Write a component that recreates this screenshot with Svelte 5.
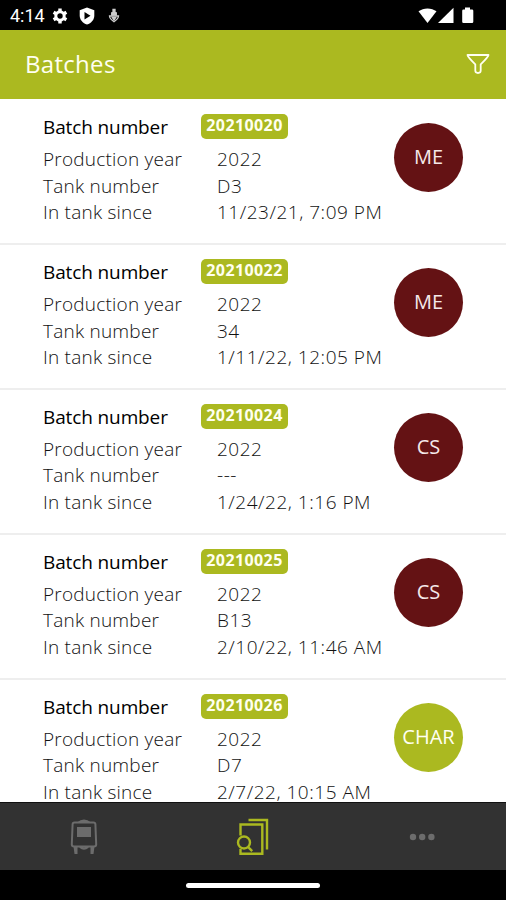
<script>
  const batches = [
    { number: '20210020', year: '2022', tank: 'D3', since: '11/23/21, 7:09 PM', variety: 'ME', kind: 'red' },
    { number: '20210022', year: '2022', tank: '34', since: '1/11/22, 12:05 PM', variety: 'ME', kind: 'red' },
    { number: '20210024', year: '2022', tank: '---', since: '1/24/22, 1:16 PM', variety: 'CS', kind: 'red' },
    { number: '20210025', year: '2022', tank: 'B13', since: '2/10/22, 11:46 AM', variety: 'CS', kind: 'red' },
    { number: '20210026', year: '2022', tank: 'D7', since: '2/7/22, 10:15 AM', variety: 'CHAR', kind: 'white' },
  ]
  let tab = $state('batches')
</script>

<div class="screen">
  <div class="status">
    <span class="clock">4:14</span>
    <svg class="gear" width="16" height="16" viewBox="0 0 16 16">
      <path class="teeth" d="M8 .6v14.8M1.6 4.3l12.8 7.4M1.6 11.7l12.8-7.4" />
      <circle cx="8" cy="8" r="4.2" />
    </svg>
    <svg class="shield" width="16" height="18" viewBox="0 0 16 18">
      <path fill="#fff" d="M8 .5l7.3 2.7v5.2c0 4.300-3 7.600-7.300 9.200C3.700 16 .7 12.700.7 8.400V3.200z" />
      <path fill="#000" d="M5.500 5l6 3.700-6 3.700z" />
    </svg>
    <svg class="debug" width="12" height="16" viewBox="0 0 12 16">
      <path fill="#ccc" d="M5 1.500h2v4H5z" />
      <path d="M3.700 5.500Q6 2.800 8.300 5.500M1.500 8h9c0 2.600-2 4-4.500 5.700C3.500 12 1.500 10.600 1.500 8z" />
      <path fill="#ccc" d="M3.700 5h4.600v2H3.700zM4.300 9.500h3.400L6 12z" />
    </svg>
    <svg class="signals" width="58" height="18" viewBox="0 0 58 18">
      <path d="M.5 4.300C5.500.4 13.500.4 18.500 4.300L9.500 16z" transform="translate(2)" />
      <path d="M35.500.8V16H20z" transform="translate(2)" />
      <path d="M47 .5h5v2h2q1.300 0 1.300 1.300v10.900q0 1.300-1.300 1.300h-8.500q-1.300 0-1.300-1.300V3.800q0-1.300 1.300-1.300H47z" transform="translate(2)" />
    </svg>
  </div>

  <header>
    <h1>Batches</h1>
    <button class="filter" aria-label="Filter">
      <svg width="24" height="22" viewBox="0 0 24 22">
        <path d="M1.500 2h21c0 1.500-2.500 4.200-7.800 9.400v6.200q0 2.400-2.700 2.400t-2.700-2.400v-6.200C4 6.200 1.500 3.500 1.500 2z" />
      </svg>
    </button>
  </header>

  <main>
    {#each batches as batch}
      <section class="batch">
        <div class="info">
          <div class="line head">
            <span class="label">Batch number</span>
            <span class="badge">{batch.number}</span>
          </div>
          <div class="line">
            <span class="label">Production year</span>
            <span class="value">{batch.year}</span>
          </div>
          <div class="line">
            <span class="label">Tank number</span>
            <span class="value">{batch.tank}</span>
          </div>
          <div class="line">
            <span class="label">In tank since</span>
            <span class="value">{batch.since}</span>
          </div>
        </div>
        <div class="avatar" class:white={batch.kind == 'white'}>{batch.variety}</div>
      </section>
    {/each}
  </main>

  <nav>
    <button class:active={tab == 'tanks'} aria-label="Tanks" onclick={() => tab = 'tanks'}>
      <svg width="28" height="38" viewBox="0 0 28 38">
        <path d="M4.500 4.500h19q1.800 0 1.900 1.800l.8 20.200q0 2-2.300 2H4.100q-2.300 0-2.300-2l.8-20.200q.1-1.800 1.900-1.800zM10 29q4 3.500 8 0" />
        <path class="fill" d="M7 9h14v10H7zM7 4.500Q14-1.500 21 4.500zM3.500 28.500h4V36h-3zM20.500 28.500h4l-1 7.500h-3z" />
      </svg>
    </button>
    <button class:active={tab == 'batches'} aria-label="Batches" onclick={() => tab = 'batches'}>
      <svg width="34" height="38" viewBox="0 0 34 38">
        <path class="thick" d="M12.500 2H31v29.500M4.500 17.500V6.500h21.800v29.200H4.500v-5M12.200 29.200l4 4" />
        <circle class="thick" cx="8" cy="24.500" r="6" />
      </svg>
    </button>
    <button class:active={tab == 'more'} aria-label="More" onclick={() => tab = 'more'}>
      <svg width="26" height="8" viewBox="0 0 26 8">
        <circle class="fill" cx="4" cy="4" r="3.200" />
        <circle class="fill" cx="13.200" cy="4" r="3.200" />
        <circle class="fill" cx="22.400" cy="4" r="3.200" />
      </svg>
    </button>
  </nav>

  <div class="home"><span></span></div>
</div>

<style>
:global(body) {
  background: #000;
  overflow: hidden;
}
.screen {
  display: flex;
  flex-direction: column;
  width: 506px;
  height: 900px;
  font-family: "Open Sans", "Noto Sans", sans-serif;
  background: #fff;
  overflow: hidden;
}
button {
  display: flex;
  align-items: center;
  justify-content: center;
  padding: 0;
  border: 0;
  background: none;
}
.status {
  display: flex;
  align-items: center;
  flex: none;
  box-sizing: border-box;
  height: 30px;
  padding: 1px 32px 0 10px;
  background: #000;
  color: #fff;
}
.clock {
  width: 42px;
  font: 18px/30px Roboto, sans-serif;
}
.gear {
  fill: none;
  stroke: #fff;
  stroke-width: 3;
}
.gear .teeth {
  stroke-width: 3.4;
  stroke-dasharray: 3 8.8 3;
}
.shield {
  margin-left: 11px;
}
.debug {
  margin-left: 13px;
  fill: none;
  stroke: #ccc;
  stroke-width: 1.3;
}
.signals {
  margin-left: auto;
  fill: #fff;
}
header {
  display: flex;
  align-items: center;
  justify-content: space-between;
  flex: none;
  box-sizing: border-box;
  height: 69px;
  padding: 0 16px 1px 25px;
  background: #abb920;
}
h1 {
  margin: 0;
  color: #fffff0;
  font-size: 24px;
  font-weight: 400;
  line-height: 32px;
  letter-spacing: .3px;
}
.filter svg {
  fill: none;
  stroke: #fffff0;
  stroke-width: 1.8;
  stroke-linejoin: round;
}
main {
  flex: 1;
  min-height: 0;
  overflow: hidden;
}
.batch {
  display: flex;
  justify-content: space-between;
  box-sizing: border-box;
  height: 144.9px;
  padding: 14px 43px 0;
  box-shadow: inset 0 -1px #eee, 0 1px #eee;
}
.line {
  display: flex;
  height: 26.7px;
  font-size: 19px;
  font-weight: 300;
  line-height: 26px;
  letter-spacing: .22px;
  color: #111;
  white-space: nowrap;
}
.label {
  width: 174px;
}
.value {
  letter-spacing: .52px;
}
.head {
  height: 33px;
  color: #000;
  font-weight: 500;
  letter-spacing: -.12px;
}
.head .label {
  width: 158px;
  line-height: 28px;
}
.badge {
  box-sizing: border-box;
  width: 87px;
  height: 25px;
  margin-top: 1px;
  border-radius: 5px;
  background: #abb920;
  color: #fffff0;
  font-size: 16px;
  font-weight: 700;
  line-height: 23px;
  letter-spacing: .4px;
  text-align: center;
}
.avatar {
  width: 69px;
  height: 69px;
  margin-top: 10px;
  border-radius: 50%;
  background: #641214;
  color: #f5e9e9;
  font-size: 20px;
  font-weight: 500;
  line-height: 67px;
  text-align: center;
}
.avatar.white {
  background: #abb920;
  color: #fffff0;
}
nav {
  display: grid;
  grid-template-columns: repeat(3, 1fr);
  flex: none;
  box-sizing: border-box;
  height: 68px;
  border-top: 1px solid #111;
  background: #323232;
}
nav button {
  color: #6c6c6c;
}
nav button.active {
  color: #abb920;
}
nav svg {
  fill: none;
  stroke: currentColor;
  stroke-width: 2;
}
nav .thick {
  stroke-width: 2.4;
}
nav .fill {
  fill: currentColor;
  stroke: none;
}
.home {
  display: flex;
  justify-content: center;
  flex: none;
  height: 30px;
  background: #000;
}
.home span {
  width: 134px;
  height: 5px;
  margin-top: 13px;
  border-radius: 3px;
  background: #fff;
}
</style>
